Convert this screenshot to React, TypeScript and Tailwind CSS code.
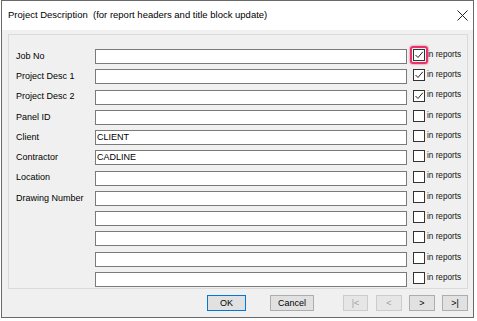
import React from "react";

const rows: { label: string; value: string; checked: boolean }[] = [
  { label: "Job No", value: "", checked: true },
  { label: "Project Desc 1", value: "", checked: true },
  { label: "Project Desc 2", value: "", checked: true },
  { label: "Panel ID", value: "", checked: false },
  { label: "Client", value: "CLIENT", checked: false },
  { label: "Contractor", value: "CADLINE", checked: false },
  { label: "Location", value: "", checked: false },
  { label: "Drawing Number", value: "", checked: false },
  { label: "", value: "", checked: false },
  { label: "", value: "", checked: false },
  { label: "", value: "", checked: false },
  { label: "", value: "", checked: false },
];

function Check({ checked, highlight }: { checked: boolean; highlight?: boolean }) {
  return (
    <div className="relative w-[12px] h-[12px] border border-[#333333] bg-white shrink-0">
      {checked && (
        <svg width="10" height="10" viewBox="0 0 10 10" className="absolute left-0 top-0">
          <path d="M1.5 5 L4 7.5 L8.8 1.8" fill="none" stroke="#222" strokeWidth="1" />
        </svg>
      )}
      {highlight && (
        <div className="absolute -left-[4px] -top-[4px] w-[18px] h-[18px] rounded-[3px] border-2 border-[#e8336a] shadow-[0_0_2px_#e8336a]" />
      )}
    </div>
  );
}

function Btn({ children, disabled, primary, w }: { children: React.ReactNode; disabled?: boolean; primary?: boolean; w: string }) {
  return (
    <div
      className={
        "h-[16px] flex items-center justify-center text-[9px] leading-none " +
        w +
        " " +
        (primary
          ? "border border-[#0078d7] bg-[#e1e1e1] text-black"
          : disabled
          ? "border border-[#cccccc] bg-[#e6e6e6] text-[#a0a0a0]"
          : "border border-[#adadad] bg-[#e1e1e1] text-black")
      }
    >
      {children}
    </div>
  );
}

export default function App() {
  return (
    <div className="w-[477px] h-[321px] bg-white" style={{ fontFamily: '"Liberation Sans", Arial, sans-serif' }}>
      <div className="ml-[1px] w-[473px] h-[318px] border border-[#6a6a6a] bg-[#f0f0f0] flex flex-col">
        <div className="h-[29px] bg-white flex items-center justify-between pl-[6px] pr-[5px] shrink-0">
          <span className="text-[9.5px] text-black whitespace-pre">Project Description  (for report headers and title block update)</span>
          <svg width="11" height="11" viewBox="0 0 11 11">
            <path d="M0.5 0.5 L10.5 10.5 M10.5 0.5 L0.5 10.5" stroke="#222" strokeWidth="1" fill="none" />
          </svg>
        </div>
        <div className="pl-[6px] pt-[4px]">
          <div className="w-[460px] h-[255px] border border-[#dadada] pt-[14px] pl-[7px]">
            {rows.map((r, i) => (
              <div key={i} className="h-[20.27px] flex items-start">
                <div className="w-[79px] h-[15px] flex items-center text-[9px] text-black whitespace-nowrap">{r.label}</div>
                <div className="w-[312px] h-[15px] border border-[#7a7a7a] bg-white flex items-center pl-[1px] text-[9px] text-black">
                  {r.value}
                </div>
                <div className="ml-[6px] flex items-center gap-[2px]">
                  <Check checked={r.checked} highlight={i === 0} />
                  <span className="text-[8.2px] text-[#111] leading-none">in reports</span>
                </div>
              </div>
            ))}
          </div>
          <div className="flex items-center mt-[6px]">
            <div className="ml-[199px]">
              <Btn primary w="w-[39px]">OK</Btn>
            </div>
            <div className="ml-[24px]">
              <Btn w="w-[44px]">Cancel</Btn>
            </div>
            <div className="ml-[29px]">
              <Btn disabled w="w-[25px]">|&lt;</Btn>
            </div>
            <div className="ml-[8px]">
              <Btn disabled w="w-[26px]">&lt;</Btn>
            </div>
            <div className="ml-[7px]">
              <Btn w="w-[26px]">&gt;</Btn>
            </div>
            <div className="ml-[7px]">
              <Btn w="w-[26px]">&gt;|</Btn>
            </div>
          </div>
        </div>
      </div>
    </div>
  );
}
